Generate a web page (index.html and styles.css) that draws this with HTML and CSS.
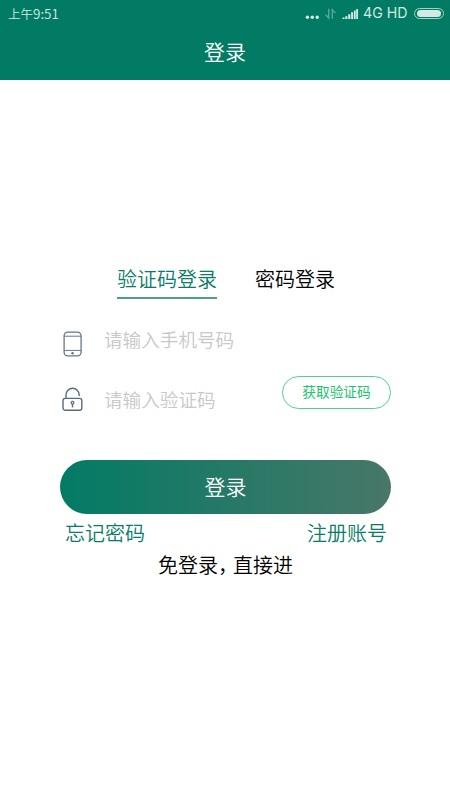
FILE: index.html
```html
<!DOCTYPE html>
<html lang="zh-CN">
<head>
<meta charset="utf-8">
<meta name="viewport" content="width=device-width, initial-scale=1">
<title>登录</title>
<link rel="stylesheet" href="styles.css">
</head>
<body>
<header class="header">
  <div class="status">
    <span class="time">上午<span class="digits">9:51</span></span>
    <div class="indicators">
      <svg class="signals" width="56" height="16" viewBox="0 0 56 16" aria-hidden="true">
        <g fill="#d3e9e4">
          <circle cx="2.4" cy="10.2" r="1.7"/><circle cx="7.3" cy="10.2" r="1.7"/><circle cx="12.2" cy="10.2" r="1.7"/>
          <path d="M37.4 12v-1.5h2.1V12zM40.3 12V9.3h2.1V12zM43.2 12V7.3h2.1V12zM46.1 12V5.3h2.1V12zM49 12V3.6h1.7V12zM51.2 12V2h1.8v10z"/>
        </g>
        <path d="M20.7 7.8l3 3.2V1.8M27.3 11.8V2.7l3 3.2" fill="none" stroke="#58a797" stroke-width="1.4"/>
      </svg>
      <span class="network">4G HD</span>
      <span class="battery"><span class="charge"></span></span>
    </div>
  </div>
  <h1 class="title">登录</h1>
</header>
<main class="login">
  <nav class="tabs">
    <a class="tab active">验证码登录</a>
    <a class="tab">密码登录</a>
  </nav>
  <div class="field phone">
    <svg class="icon" width="22" height="26" viewBox="0 0 22 26" fill="none" stroke="#66788a" stroke-width="1.3" aria-hidden="true">
      <rect x="2.1" y="1.1" width="17" height="23.8" rx="3.6"/>
      <path d="M2.1 5.2h17M2.1 19.4h17" stroke-width="1"/>
      <circle cx="10.6" cy="22.2" r="1.3" fill="#66788a" stroke="none"/>
    </svg>
    <span class="placeholder">请输入手机号码</span>
  </div>
  <div class="field code">
    <svg class="icon" width="22" height="26" viewBox="0 0 22 26" fill="none" stroke="#596b7e" stroke-width="1.4" aria-hidden="true">
      <rect x="1" y="11.4" width="18.8" height="11.8" rx="2.2"/>
      <path d="M4 11.4V7.9a6.6 6.6 0 0 1 13.2 0v1.2"/>
      <circle cx="10.5" cy="15.8" r="1.4" stroke-width="1.2"/>
      <path d="M10.5 17.2v3.2"/>
    </svg>
    <span class="placeholder">请输入验证码</span>
    <button class="get-code">获取验证码</button>
  </div>
  <button class="submit">登录</button>
  <div class="links"><a>忘记密码</a><a>注册账号</a></div>
  <a class="guest">免登录<span class="comma">，</span>直接进</a>
</main>
</body>
</html>
```
FILE: styles.css
```css
* { box-sizing: border-box; }
body {
  margin: 0;
  min-height: 800px;
  background: #fff;
  color: #000;
  font-family: "Noto Sans CJK SC", sans-serif;
  font-weight: 350;
}
button { font: inherit; padding: 0; border: 0; }
.header { height: 80px; background: #027b65; color: #fff; }
.status {
  display: flex;
  justify-content: space-between;
  height: 26px;
  padding: 0 6px 0 8px;
  line-height: 26px;
  font-size: 12.5px;
  color: #d3e9e4;
}
.digits { font-size: 13.5px; }
.indicators { display: flex; align-items: center; }
.signals { margin-top: 3px; margin-right: 2px; }
.network { font-family: Inter, sans-serif; font-weight: 400; font-size: 14.2px; width: 46px; margin-right: 5px; white-space: nowrap; }
.battery { width: 30px; height: 11px; padding: 1px 2px; border: 1px solid #a6d1c8; border-radius: 6px; }
.charge { display: block; height: 7px; border-radius: 4px; background: #d3e9e4; }
.title { margin: 0; font-size: 21px; font-weight: 350; line-height: 50px; text-align: center; }
.login { display: flex; flex-direction: column; padding: 184px 59px 0 60px; }
.tabs { display: flex; gap: 38px; padding-left: 57px; }
.tab { height: 35px; line-height: 30px; font-size: 20px; }
.tab.active { color: #087c67; border-bottom: 2px solid #4b9f90; }
.field { display: flex; align-items: center; height: 26px; }
.phone { margin-top: 32px; }
.code { margin-top: 30px; }
.icon { flex: none; margin: 0 20px 0 2px; }
.placeholder { width: 178px; font-size: 18.6px; line-height: 26px; color: #c8c8c8; margin-top: -2px; }
.phone .placeholder { margin-top: -10px; }
.get-code {
  flex: none;
  width: 109px;
  height: 33px;
  margin-top: -15px;
  padding-bottom: 4px;
  border: 1px solid #4fd28b;
  border-radius: 17px;
  background: #fff;
  color: #20c46b;
  font-size: 13.7px;
  font-weight: 400;
  line-height: 26px;
}
.submit {
  height: 54px;
  margin-top: 47px;
  padding-bottom: 2px;
  border-radius: 27px;
  background: linear-gradient(90deg, #027b65, #487768);
  color: #fff;
  font-size: 21px;
}
.links { display: flex; justify-content: space-between; padding: 4px 4px 0 5px; font-size: 20px; line-height: 30px; color: #087c67; }
.guest { margin-top: 2px; padding-left: 98px; font-size: 20px; line-height: 30px; }
.comma { letter-spacing: -5px; }
```
